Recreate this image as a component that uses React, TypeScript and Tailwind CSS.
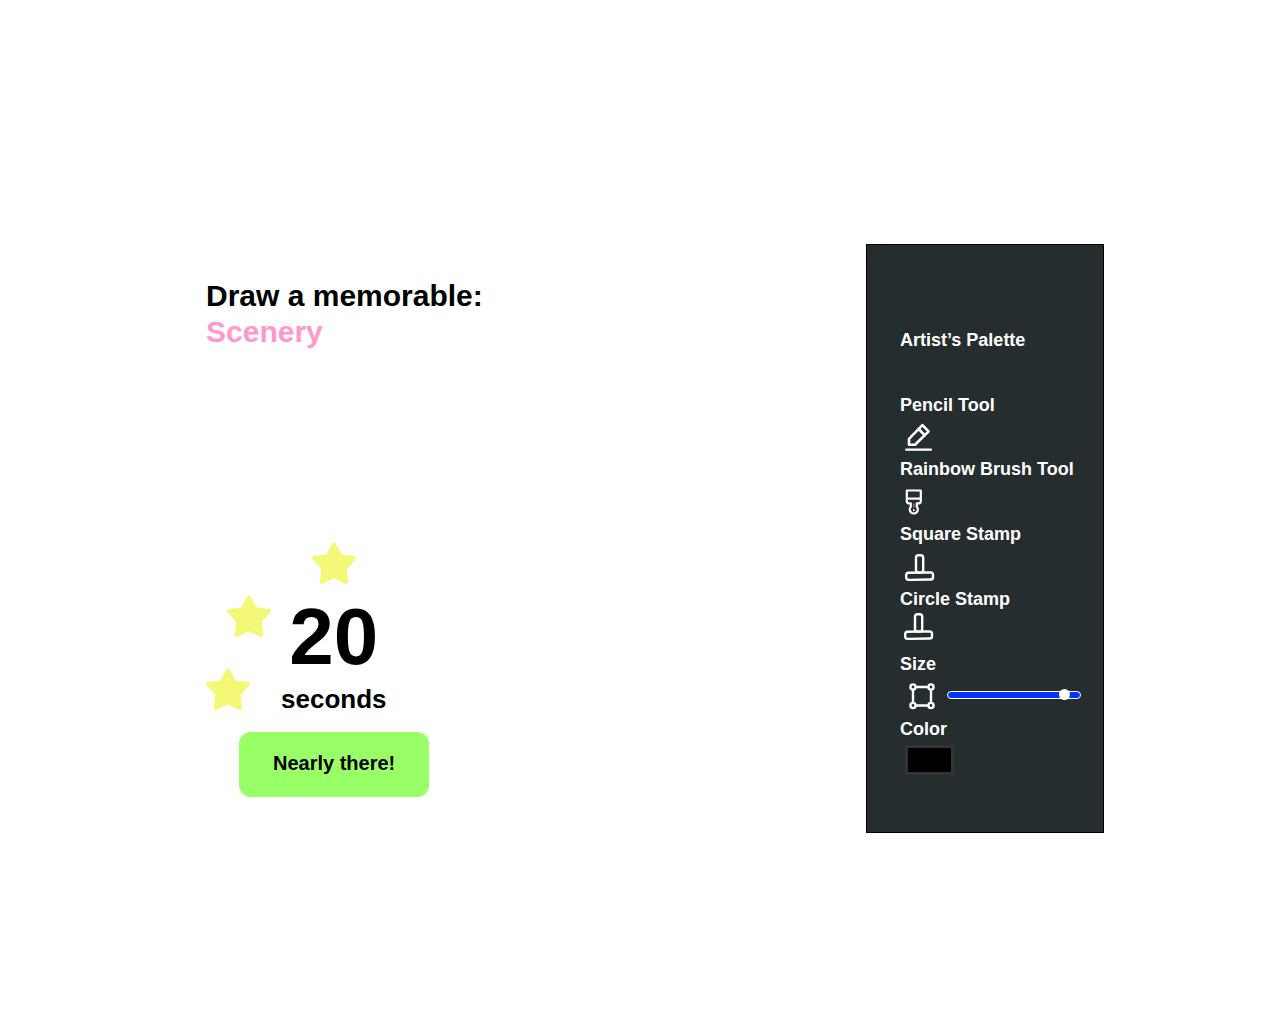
import { useState } from "react";
import type { ReactNode } from "react";

function Star({ className = "" }: { className?: string }) {
  return (
    <svg viewBox="0 0 44 42" className={`h-[42px] w-11 text-[#f3f877] ${className}`} aria-hidden="true">
      <path
        d="M22 2.5 28.3 14.3 42 16 32.8 26.2 34.2 40 22 34.2 9.8 40 11.2 26.2 2 16 15.7 14.3Z"
        fill="currentColor"
        stroke="currentColor"
        strokeWidth="4"
        strokeLinejoin="round"
      />
    </svg>
  );
}

function PencilIcon() {
  return (
    <svg viewBox="0 1 28 28" className="h-7 w-7 overflow-visible" fill="none" stroke="currentColor" strokeWidth="2.6" strokeLinejoin="round" strokeLinecap="round" aria-hidden="true">
      <path d="M4 20.8V14.8L17.4 1.2 23.6 7.4 10 20.8Z" />
      <path d="M13.6 5 19.6 11.2" />
      <path d="M1.2 25.7H26" strokeWidth="2.3" />
    </svg>
  );
}

function BrushIcon() {
  return (
    <svg viewBox="0 0 18 28" className="h-7 w-[18px]" fill="none" stroke="currentColor" strokeWidth="2.2" strokeLinejoin="round" aria-hidden="true">
      <path d="M1.8 1.5H15.8V12.3Q15.8 14.3 13.8 14.3H11.8V17.8A4 4 0 1 1 5.8 17.8V14.3H3.8Q1.8 14.3 1.8 12.3Z" />
      <path d="M2 9.6H16" />
      <path d="M8.8 14.5V18.5" strokeWidth="1" strokeOpacity="0.6" />
      <circle cx="8.8" cy="21" r="1" fill="currentColor" stroke="none" />
    </svg>
  );
}

function StampIcon() {
  return (
    <svg viewBox="0 0 30 28" className="h-7 w-[30px]" fill="none" stroke="currentColor" strokeWidth="2.4" strokeLinejoin="round" aria-hidden="true">
      <rect x="11" y="1.2" width="7.2" height="17.4" rx="2.6" />
      <path d="M3.6 18.8 25.6 18.4Q28 18.6 28 20.8V23.2Q28 25.5 25.6 25.5L3.6 25.9Q1.2 25.7 1.2 23.5V21.2Q1.2 19 3.6 18.8Z" />
    </svg>
  );
}

function SizeIcon() {
  return (
    <svg viewBox="0 0 26 27" className="h-[27px] w-[26px] shrink-0" fill="none" stroke="currentColor" strokeWidth="2.4" aria-hidden="true">
      <path d="M6.5 4H19.5M6.5 22.5H19.5M4 6.5V20M22 6.5V20" />
      <circle cx="4" cy="4" r="2.6" />
      <circle cx="22" cy="4" r="2.6" />
      <circle cx="4" cy="22.5" r="2.6" />
      <circle cx="22" cy="22.5" r="2.6" />
    </svg>
  );
}

function Tool({
  name,
  children,
  height = "min-h-[65px]",
  className = "pt-[10px] pl-[5px]",
}: {
  name: string;
  children: ReactNode;
  height?: string;
  className?: string;
}) {
  return (
    <button type="button" className={`flex cursor-pointer flex-col items-start whitespace-nowrap text-left ${height}`}>
      <span>{name}</span>
      <span className={className}>{children}</span>
    </button>
  );
}

export default function App() {
  const [size, setSize] = useState(92);
  const [color, setColor] = useState("#000000");

  return (
    <main className="flex min-h-screen items-start justify-between bg-white pt-[244px] pr-[175px] pb-12 pl-[206px] font-['Liberation_Sans',Arial,sans-serif] font-bold text-black">
      <section className="pt-[34px]">
        <h1 className="text-[30px] leading-9">
          Draw a memorable:
          <span className="block text-[#ff99cc]">Scenery</span>
        </h1>

        <div className="mt-48 flex gap-[10px]">
          <div className="flex w-[65px] flex-col gap-[31px] pt-[53px]">
            <Star className="self-end" />
            <Star className="self-start" />
          </div>
          <div className="flex flex-col items-center">
            <Star />
            <span className="mt-[13px] text-[80px] leading-20">20</span>
            <span className="mt-[6px] text-[26px] leading-8">seconds</span>
          </div>
        </div>

        <button type="button" className="mt-[17px] ml-[33px] cursor-pointer rounded-xl bg-[#99ff66] px-[34px] pt-[17px] pb-[19px] text-xl leading-[29px]">
          Nearly there!
        </button>
      </section>

      <aside className="flex w-[238px] flex-col border border-black bg-[#262d2f] pt-[85px] pr-[22px] pb-12 pl-[33px] text-lg leading-5 text-white">
        <h2 className="min-h-[65px]">Artist’s Palette</h2>
        <Tool name="Pencil Tool" height="h-16"><PencilIcon /></Tool>
        <Tool name="Rainbow Brush Tool"><BrushIcon /></Tool>
        <Tool name="Square Stamp"><StampIcon /></Tool>
        <Tool name="Circle Stamp" className="pt-1 pl-1"><StampIcon /></Tool>
        <div className="min-h-[65px]">
          <label htmlFor="size">Size</label>
          <div className="flex items-center gap-3 pt-[9px] pl-[9px]">
            <SizeIcon />
            <input
              id="size"
              type="range"
              min="0"
              max="100"
              value={size}
              onChange={(e) => setSize(Number(e.target.value))}
              className="mb-1 h-2 w-full min-w-0 cursor-pointer appearance-none rounded-full border border-white bg-[#0033ff] [&::-webkit-slider-thumb]:h-[11px] [&::-webkit-slider-thumb]:w-[11px] [&::-webkit-slider-thumb]:appearance-none [&::-webkit-slider-thumb]:rounded-full [&::-webkit-slider-thumb]:bg-white"
            />
          </div>
        </div>
        <div className="flex min-h-[65px] flex-col items-start">
          <label htmlFor="color">Color</label>
          <input
            id="color"
            type="color"
            value={color}
            onChange={(e) => setColor(e.target.value)}
            className="mt-[6px] ml-[5px] h-[30px] w-[49px] cursor-pointer appearance-none border-3 border-[#333333] p-0 [&::-webkit-color-swatch]:border-0 [&::-webkit-color-swatch-wrapper]:p-0"
          />
        </div>
      </aside>
    </main>
  );
}
